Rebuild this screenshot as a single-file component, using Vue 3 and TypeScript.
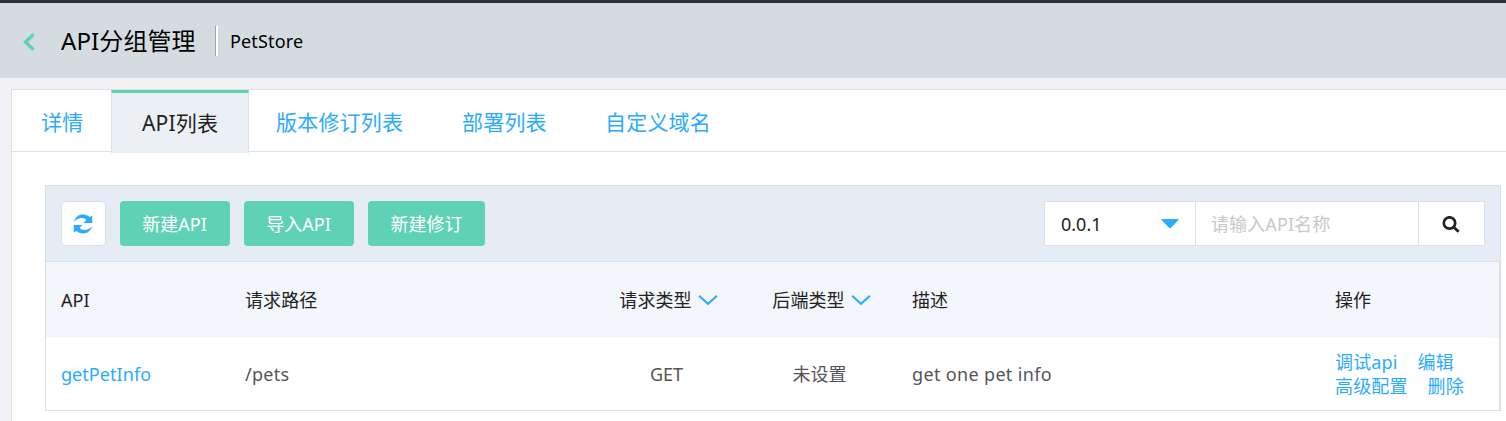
<script setup lang="ts">
import { ref } from 'vue'

interface Tab { id: string; label: string }
interface ApiRow { name: string; path: string; method: string; backend: string; desc: string }

const tabs: Tab[] = [
  { id: 'detail', label: '详情' },
  { id: 'apis', label: 'API列表' },
  { id: 'revisions', label: '版本修订列表' },
  { id: 'deploys', label: '部署列表' },
  { id: 'domains', label: '自定义域名' },
]
const active = ref('apis')
const actions: string[] = ['新建API', '导入API', '新建修订']
const keyword = ref('')
const rows: ApiRow[] = [
  { name: 'getPetInfo', path: '/pets', method: 'GET', backend: '未设置', desc: 'get one pet info' },
]
</script>

<template>
  <div class="page">
    <div class="topbar"></div>
    <header class="header">
      <svg class="back" width="12" height="18" viewBox="0 0 12 18"><path d="M10.500 1.200 2.500 9l8 7.800" /></svg>
      <h1>API分组管理</h1>
      <i class="divider"></i>
      <span class="group">PetStore</span>
    </header>

    <main class="panel">
      <nav class="tabs">
        <a v-for="t in tabs" :key="t.id" class="tab" :class="[t.id, { active: active === t.id }]" @click="active = t.id"><span>{{ t.label }}</span></a>
      </nav>

      <section class="card">
        <div class="toolbar">
          <button class="refresh" aria-label="refresh">
            <svg width="20" height="20" viewBox="0 0 20 20">
              <path d="M.8 7.800C2.200 3.200 5.500.6 10 .6c2.700 0 4.900.9 6.600 2.300L19.200 1.600V9H10.600L13.400 5.900C12.200 4.700 10.800 4 9 4 5.800 4 3 5.200.8 7.800Z" />
              <path d="M19.200 12.200c-1.400 4.600-4.700 7.200-9.200 7.200-2.700 0-4.900-.9-6.600-2.300L.8 18.400V11h8.600l-2.800 3.100c1.200 1.200 2.600 1.900 4.400 1.900 3.200 0 6-1.200 8.200-3.800Z" />
            </svg>
          </button>
          <button v-for="a in actions" :key="a" class="btn"><span>{{ a }}</span></button>
          <div class="filters">
            <div class="select">
              <span>0.0.1</span>
              <svg width="18" height="10" viewBox="0 0 18 10"><path d="M1 0h16q1.200 0 .4 1L10.200 8.600Q9 9.700 7.800 8.600L.6 1Q-.2 0 1 0Z" /></svg>
            </div>
            <input v-model="keyword" placeholder="请输入API名称" />
            <button class="search" aria-label="search">
              <svg width="18" height="17" viewBox="0 0 18 17"><circle cx="7.500" cy="7" r="5.700" /><path d="m11.500 11 5.200 4.800" /></svg>
            </button>
          </div>
        </div>

        <div class="table">
          <div class="row head">
            <div class="cell"><span class="api">API</span></div>
            <div class="cell">请求路径</div>
            <div class="cell mid">请求类型<svg width="20" height="12" viewBox="0 0 20 12"><path d="m1 1.800 9 8 9-8" /></svg></div>
            <div class="cell mid">后端类型<svg width="20" height="12" viewBox="0 0 20 12"><path d="m1 1.800 9 8 9-8" /></svg></div>
            <div class="cell">描述</div>
            <div class="cell">操作</div>
          </div>
          <div v-for="r in rows" :key="r.name" class="row">
            <div class="cell"><a class="name">{{ r.name }}</a></div>
            <div class="cell"><span class="path">{{ r.path }}</span></div>
            <div class="cell mid"><span class="method">{{ r.method }}</span></div>
            <div class="cell mid backend">{{ r.backend }}</div>
            <div class="cell"><span class="desc">{{ r.desc }}</span></div>
            <div class="cell ops">
              <div><a>调试api</a><a>编辑</a></div>
              <div><a>高级配置</a><a>删除</a></div>
            </div>
          </div>
        </div>
      </section>
    </main>
  </div>
</template>

<style>
body { margin: 0; background: #f2f2f4; overflow: hidden; }
</style>

<style scoped>
.page, button, input { font-family: "Noto Sans", "Noto Sans CJK SC", sans-serif; font-weight: 400; }
.page { width: 100%; height: 421px; overflow: hidden; background: #f2f2f4; font-size: 18px; color: #222; box-sizing: border-box; white-space: nowrap; }
.page * { box-sizing: border-box; }
.topbar { height: 3px; background: #2d2e3a; }
.header { height: 75px; background: #d5dce0; display: flex; align-items: center; padding-left: 23px; color: #000; }
.back { margin-right: 26px; margin-top: 3px; fill: none; stroke: #5fd2b6; stroke-width: 3.4; }
h1 { margin: 0; width: 154px; font-size: 24px; font-weight: 400; line-height: 36px; letter-spacing: .1px; }
.divider { width: 3px; height: 30px; border-left: 1px solid #a0a5a8; background: #fff; }
.group { margin-left: 12px; font-size: 18px; letter-spacing: .15px; }

.panel { margin: 11px 0 0 11px; height: 340px; background: #fff; border: solid #d9e1e8; border-width: 1px 0 0 1px; }
.tabs { display: flex; height: 62px; border-bottom: 1px solid #d9e1e8; font-size: 21px; letter-spacing: .2px; }
.tab { height: 61px; color: #2babff; display: flex; align-items: center; cursor: pointer; }
.tab.detail { width: 99px; padding-left: 29px; }
.tab.revisions { width: 185px; padding-left: 27px; }
.tab.deploys { width: 143px; padding-left: 28px; }
.tab.domains { padding-left: 28px; }
.tab.active { width: 138px; height: 63px; justify-content: center; color: #222; background: #ebf0f5; border: 1px solid #d9e1e8; border-top: 3px solid #5fd2b6; border-bottom: 0; padding-bottom: 3px; }

.card { width: 1456px; margin: 33px 0 0 33px; }
.toolbar { height: 77px; padding: 0 15px; display: flex; align-items: center; background: #e6ecf5; border: 1px solid #d9e1e8; }
button { padding: 0; border: 0; display: flex; align-items: center; justify-content: center; }
.refresh { width: 45px; height: 45px; background: #fff; border: 1px solid #d9e1e8; border-radius: 5px; margin-right: 14px; }
.refresh svg { fill: #2babff; margin-right: 1px; }
.btn { width: 110px; height: 45px; margin-right: 14px; padding: 0 1px 2px 0; border-radius: 4px; background: #5fd2b6; color: #fff; font-size: 18px; }
.btn:nth-of-type(4) { width: 117px; padding-right: 0; }
.filters { margin-left: auto; display: flex; width: 441px; height: 45px; background: #fff; border: 1px solid #d9e1e8; }
.select { width: 151px; padding: 0 16px; display: flex; align-items: center; justify-content: space-between; border-right: 1px solid #d9e1e8; }
.select svg { fill: #2babff; }
input { width: 223px; border: 0; border-right: 1px solid #d9e1e8; padding: 0 15px; font-size: 18px; letter-spacing: .1px; outline: 0; background: #fff; }
input::placeholder { color: #c8c8c8; opacity: 1; }
.search { flex: 1; background: #fff; }
.search svg { fill: none; stroke: #1e2226; stroke-width: 2.7; margin-top: 1px; margin-right: 2px; }

.table { border: solid #d9e1e8; border-width: 0 2px 1px 1px; }
.row { height: 72px; display: grid; grid-template-columns: 184px 361px 153px 153px 423px 1fr; color: #555; background: #fff; }
.row.head { height: 76px; background: #f3f6fb; color: #222; padding-bottom: 2px; letter-spacing: .1px; }
.cell { padding-left: 15px; display: flex; align-items: center; }
.cell.mid { padding: 0; justify-content: center; }
.head .cell.mid { padding-left: 2px; }
.cell.backend { padding: 0 2px 2px 0; }
.cell svg { margin: 2px 0 0 6px; fill: none; stroke: #2babff; stroke-width: 2; }
.path { letter-spacing: .3px; }
.desc { letter-spacing: .34px; }
.method { margin-right: 2px; }
.api { padding-top: 2px; letter-spacing: 0; }
.name { letter-spacing: .05px; }
.name, .ops { color: #2babff; }
.cell.ops { flex-direction: column; align-items: flex-start; justify-content: center; line-height: 24px; letter-spacing: .15px; }
.ops a + a { margin-left: 20px; }
</style>
